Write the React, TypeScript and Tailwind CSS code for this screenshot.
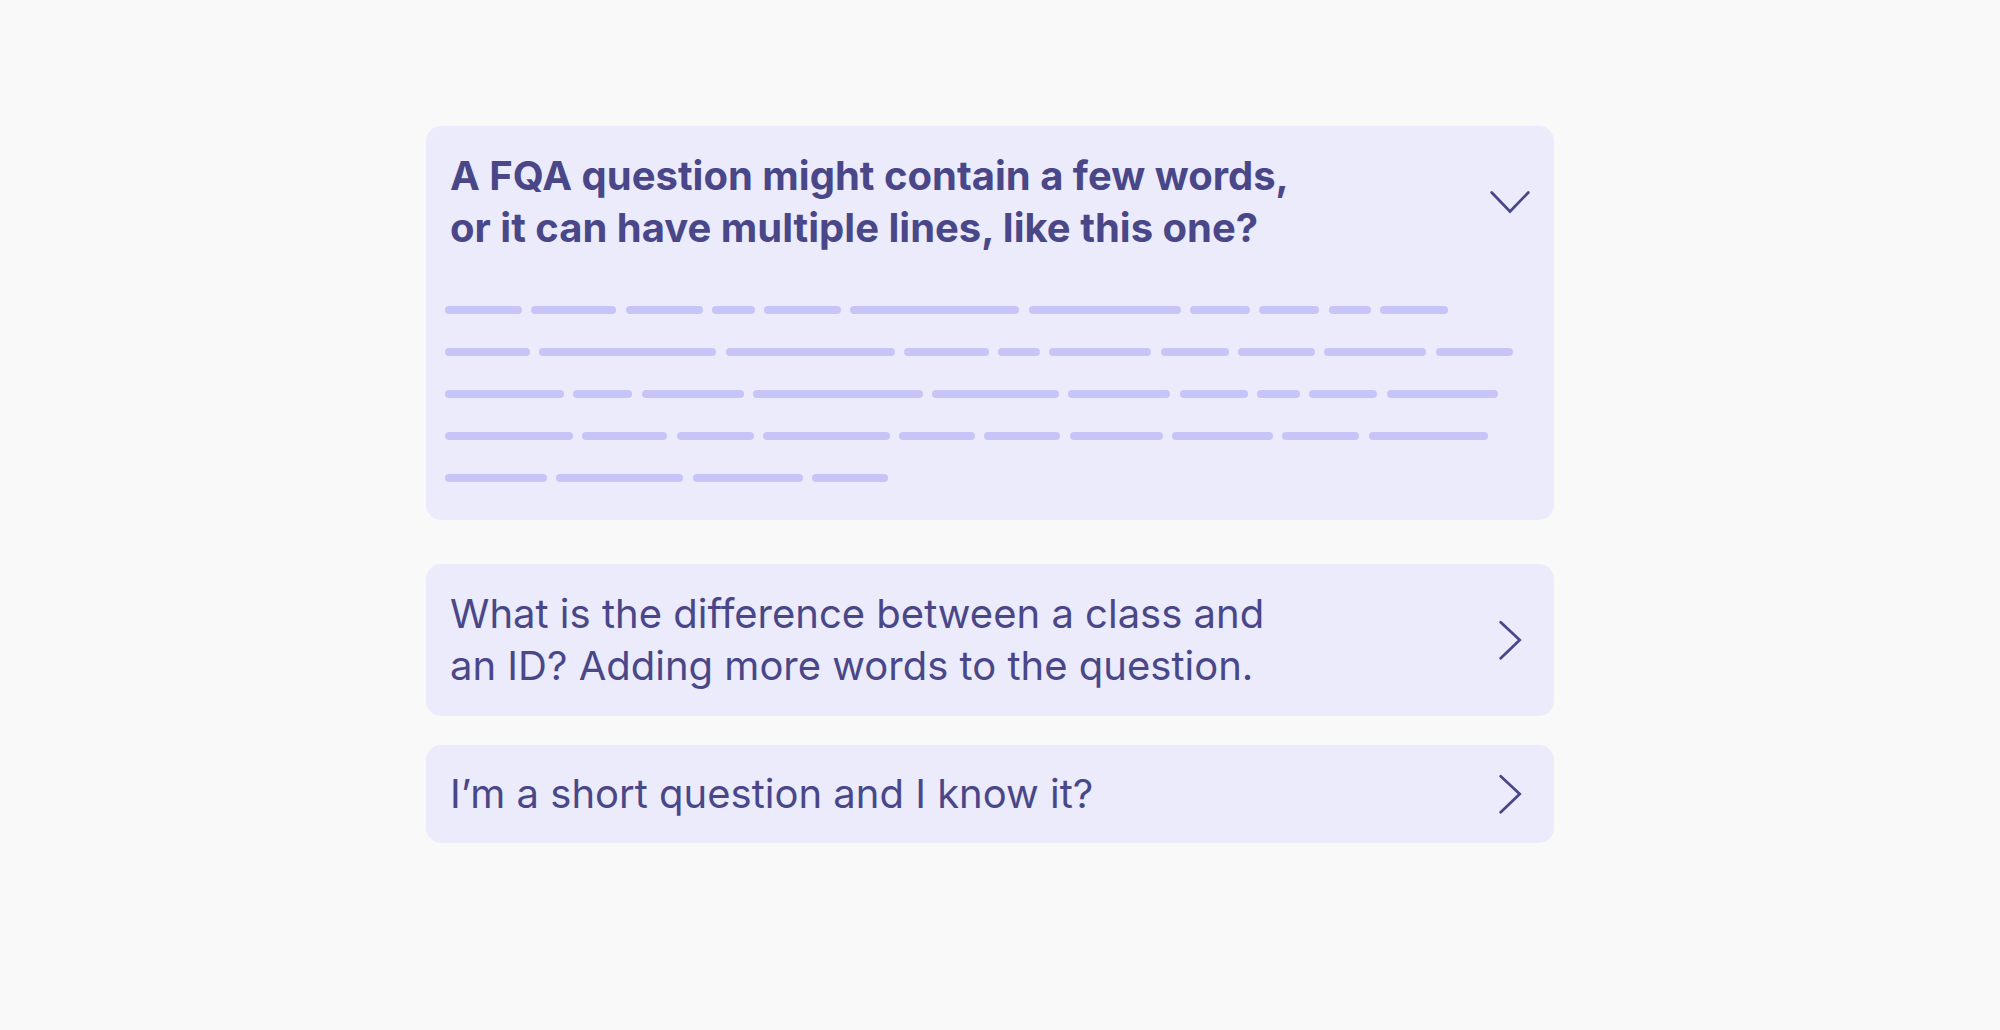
import React from "react";

const rows: string[][] = [
  ["w-[77px]", "w-[85px]", "w-[77px]", "w-[43px]", "w-[77px]", "w-[169px]", "w-[152px]", "w-[60px]", "w-[60px]", "w-[42px]", "w-[68px]"],
  ["w-[85px]", "w-[177px]", "w-[169px]", "w-[85px]", "w-[42px]", "w-[102px]", "w-[68px]", "w-[77px]", "w-[102px]", "w-[77px]"],
  ["w-[119px]", "w-[59px]", "w-[102px]", "w-[170px]", "w-[127px]", "w-[102px]", "w-[68px]", "w-[43px]", "w-[68px]", "w-[111px]"],
  ["w-[128px]", "w-[85px]", "w-[77px]", "w-[127px]", "w-[76px]", "w-[76px]", "w-[93px]", "w-[101px]", "w-[77px]", "w-[119px]"],
  ["w-[102px]", "w-[127px]", "w-[110px]", "w-[76px]"],
];

function ChevronDown() {
  return (
    <svg width="40" height="40" viewBox="0 0 40 40" fill="none" className="shrink-0">
      <polyline points="1.7,10.5 20,29.5 38.3,10.5" stroke="#4a4789" strokeWidth="2.75" strokeLinecap="round" strokeLinejoin="miter" />
    </svg>
  );
}

function ChevronRight() {
  return (
    <svg width="40" height="40" viewBox="0 0 40 40" fill="none" className="shrink-0">
      <polyline points="10.7,2.3 29.7,20 10.7,38.2" stroke="#4a4789" strokeWidth="2.75" strokeLinecap="round" strokeLinejoin="miter" />
    </svg>
  );
}

export default function App() {
  return (
    <div
      className="min-h-[1030px] w-full bg-[#f9f9f9] text-[#4a4789]"
      style={{ fontFamily: "Inter, 'Noto Sans', sans-serif" }}
    >
      <div className="ml-[426px] flex w-[1128px] flex-col pt-[126px]">
        {/* Open item */}
        <div className="rounded-[15px] bg-[#ebebfc]">
          <div className="flex items-center px-6 pt-6">
            <h2 className="max-w-[860px] flex-1 text-[40px] font-bold leading-[52px]">
              A FQA question might contain a few words, or it can have multiple lines, like this one?
            </h2>
            <div className="ml-auto">
              <ChevronDown />
            </div>
          </div>
          <div className="flex flex-col gap-[34px] pb-[38px] pl-[19px] pt-[52px]">
            {rows.map((row, i) => (
              <div key={i} className="flex gap-[9.3px]">
                {row.map((w, j) => (
                  <div key={j} className={`h-2 rounded-full bg-[#c7c5f8] ${w}`} />
                ))}
              </div>
            ))}
          </div>
        </div>

        {/* Closed item 2 */}
        <div className="mt-[44px] flex items-center rounded-[15px] bg-[#ebebfc] px-6 py-6">
          <p className="max-w-[860px] flex-1 text-[40px] font-normal leading-[52px]">
            What is the difference between a class and an ID? Adding more words to the question.
          </p>
          <div className="ml-auto">
            <ChevronRight />
          </div>
        </div>

        {/* Closed item 3 */}
        <div className="mt-[29px] flex items-center rounded-[15px] bg-[#ebebfc] px-6 py-[23px]">
          <p className="max-w-[860px] flex-1 text-[40px] font-normal leading-[52px]">
            I’m a short question and I know it?
          </p>
          <div className="ml-auto">
            <ChevronRight />
          </div>
        </div>
      </div>
    </div>
  );
}
